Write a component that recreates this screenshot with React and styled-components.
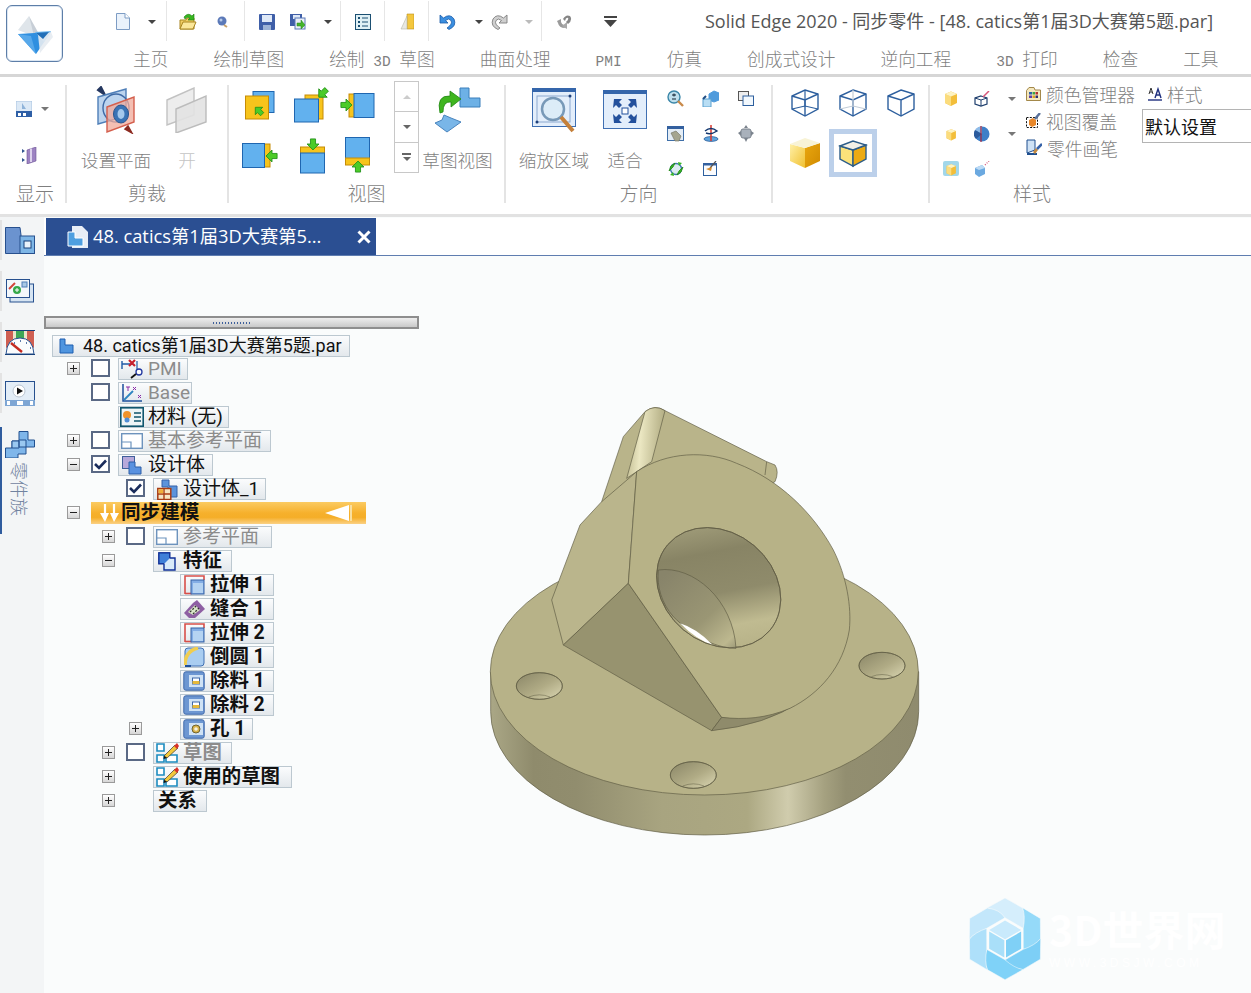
import React from 'react';
import styled, { createGlobalStyle } from 'styled-components';

const CJK = '"Noto Sans CJK SC", sans-serif';
const UI = '"Open Sans", "Noto Sans CJK SC", sans-serif';
const TREE = 'Roboto, "Noto Sans CJK SC", sans-serif';
const GRAY = '#7f7f7f';

const Global = createGlobalStyle`
  html, body { margin: 0; padding: 0; background: #fff; }
  body { font-family: ${UI}; }
`;

const Page = styled.div`
  width: 1251px;
  height: 993px;
  overflow: hidden;
  display: flex;
  flex-direction: column;
  background: #fff;
`;

/* ---------- header ---------- */
const Header = styled.header`
  height: 74px;
  display: flex;
  flex-shrink: 0;
`;
const AppButton = styled.div`
  width: 55px;
  height: 55px;
  margin: 5px 0 0 6px;
  border: 1px solid #5d7ea8;
  box-shadow: inset 0 0 0 1px #dbe6f2;
  border-radius: 6px;
  display: flex;
  align-items: center;
  justify-content: center;
  background: #fff;
`;
const HeaderMain = styled.div`
  flex: 1;
  display: flex;
  flex-direction: column;
  min-width: 0;
`;
const TopRow = styled.div`
  height: 43px;
  display: flex;
  align-items: center;
  padding-left: 45px;
`;
const Slot = styled.div`
  width: ${p => p.w}px;
  height: 40px;
  display: flex;
  align-items: center;
  justify-content: center;
  flex-shrink: 0;
`;
const QatSep = styled.div`
  width: 1px;
  height: 40px;
  margin-top: -2px;
  background: #e6e6e6;
  flex-shrink: 0;
`;
const Drop = styled.span`
  width: 0;
  height: 0;
  border-left: 4px solid transparent;
  border-right: 4px solid transparent;
  border-top: 4px solid ${p => p.c || '#444'};
`;
const DropUp = styled(Drop)`
  transform: rotate(180deg);
`;
const Title = styled.div`
  margin: -3px 0 0 71px;
  font-size: 18px;
  color: #555;
  white-space: nowrap;
`;
const TabRow = styled.nav`
  height: 29px;
  display: flex;
  align-items: center;
  gap: 45px;
  padding-left: 70px;
`;
const RibbonTab = styled.span`
  font-family: ${CJK};
  font-size: 17.7px;
  font-weight: 300;
  color: ${GRAY};
  white-space: nowrap;
`;
const Latin = styled.span`
  font-family: "Liberation Mono", monospace;
  font-size: 14.5px;
  white-space: pre;
`;

/* ---------- ribbon ---------- */
const Ribbon = styled.section`
  height: 137px;
  flex-shrink: 0;
  display: flex;
  border-top: 3px solid #d6d6d6;
  border-bottom: 3px solid #e2e2e2;
  box-sizing: content-box;
`;
const Group = styled.div`
  width: ${p => p.w}px;
  flex-shrink: 0;
  display: flex;
  flex-direction: column;
`;
const GroupBody = styled.div`
  height: 105px;
  display: flex;
  padding-left: ${p => p.pl || 0}px;
`;
const GroupLabel = styled.div`
  width: ${p => (p.w ? `${p.w}px` : 'auto')};
  height: 22px;
  padding-left: ${p => p.pl || 0}px;
  line-height: 22px;
  text-align: center;
  font-family: ${CJK};
  font-size: 19px;
  font-weight: 300;
  color: ${GRAY};
`;
const RibbonSep = styled.div`
  width: 2px;
  height: 118px;
  margin-top: 8px;
  flex-shrink: 0;
  background: #e4e4e4;
`;
const ShowCol = styled.div`
  display: flex;
  flex-direction: column;
  padding: 23px 0 0 16px;
`;
const ShowRow = styled.div`
  display: flex;
  align-items: center;
  gap: 9px;
  height: 18px;
  margin-left: ${p => p.ml || 0}px;
  margin-top: ${p => p.mt || 0}px;
`;
const BigBtn = styled.div`
  width: ${p => p.w}px;
  margin-left: ${p => p.ml || 0}px;
  flex-shrink: 0;
  padding-top: 3px;
  display: flex;
  flex-direction: column;
  align-items: center;
`;
const BigIcon = styled.div`
  height: 60px;
  margin-bottom: 9px;
  display: flex;
  align-items: center;
  justify-content: center;
`;
const BigText = styled.div`
  height: 22px;
  line-height: 22px;
  font-family: ${CJK};
  font-size: 17.6px;
  font-weight: 300;
  color: ${p => (p.off ? '#c4c4c4' : GRAY)};
  white-space: nowrap;
`;
const IconGrid = styled.div`
  display: grid;
  grid-template-columns: ${p => p.cols};
  grid-auto-rows: ${p => p.row}px;
  row-gap: ${p => p.gap || 0}px;
  margin: ${p => p.m || 0};
  place-items: center;
  flex-shrink: 0;
`;
const Gallery = styled.div`
  width: 23px;
  height: 90px;
  margin: 4px 0 0 18px;
  border: 1px solid #c8c8c8;
  display: flex;
  flex-direction: column;
  flex-shrink: 0;
`;
const GalleryCell = styled.div`
  flex: 1;
  display: flex;
  flex-direction: column;
  gap: 2px;
  align-items: center;
  justify-content: center;
  & + & { border-top: 1px solid #c8c8c8; }
`;
const GalleryBar = styled.span`
  width: 9px;
  height: 2px;
  background: #666;
`;
const SelectedBox = styled.div`
  width: 48px;
  height: 48px;
  box-sizing: border-box;
  border: 5px solid #bcd0ea;
  background: #fff;
  display: flex;
  align-items: center;
  justify-content: center;
`;
const StyleList = styled.div`
  display: flex;
  flex-direction: column;
  padding-top: 3px;
  width: 116px;
  flex-shrink: 0;
`;
const StyleItem = styled.div`
  height: 27px;
  display: flex;
  align-items: center;
  gap: 5px;
  font-family: ${CJK};
  font-size: 17.8px;
  font-weight: 300;
  color: ${GRAY};
  white-space: nowrap;
`;
const StyleSide = styled.div`
  display: flex;
  flex-direction: column;
  padding-top: 3px;
`;
const StyleHead = styled(StyleItem)`
  padding-left: 6px;
  height: 27px;
`;
const Combo = styled.div`
  width: 125px;
  height: 34px;
  margin-top: 2px;
  box-sizing: border-box;
  border: 1px solid #b4b4b4;
  padding-left: 2px;
  line-height: 32px;
  font-family: ${CJK};
  font-size: 18px;
  color: #111;
`;

/* ---------- document area ---------- */
const Work = styled.div`
  flex: 1;
  display: flex;
  min-height: 0;
`;
const Rail = styled.aside`
  width: 44px;
  flex-shrink: 0;
  background: #f3f5f6;
  padding-top: 3px;
  display: flex;
  flex-direction: column;
  gap: 11px;
`;
const RailItem = styled.div`
  height: 40px;
  border-left: 2px solid #e3e3e3;
  display: flex;
  align-items: center;
  justify-content: center;
  padding-right: 6px;
`;
const RailActive = styled.div`
  height: 107px;
  margin-top: 3px;
  border-left: 2px solid #2f5c9e;
  display: flex;
  flex-direction: column;
  align-items: center;
  padding: 4px 6px 0 0;
  box-sizing: border-box;
`;
const RailText = styled.div`
  writing-mode: vertical-rl;
  text-orientation: sideways;
  margin-top: 4px;
  font-family: ${CJK};
  font-size: 18px;
  font-weight: 300;
  color: #7183a0;
`;
const Main = styled.main`
  flex: 1;
  position: relative;
  background: #fafcfc;
  min-width: 0;
`;
const TabBar = styled.div`
  height: 37px;
  background: #fff;
  border-bottom: 1px solid #5f7db0;
  box-sizing: content-box;
`;
const DocTab = styled.div`
  width: 330px;
  height: 37px;
  margin: 1px 0 0 2px;
  background: #2b4f92;
  display: flex;
  align-items: center;
  padding-left: 21px;
  box-sizing: border-box;
  color: #fff;
`;
const DocTabText = styled.span`
  margin: -3px 0 0 4px;
  flex: 1;
  font-size: 18.3px;
  white-space: nowrap;
`;
const DocClose = styled.span`
  display: flex;
  margin-right: 5px;
`;
const TreePanel = styled.div`
  width: 375px;
  padding-top: 60px;
`;
const DragBar = styled.div`
  height: 13px;
  box-sizing: border-box;
  border: 2px solid #8e8e8e;
  background: linear-gradient(#eeeeee, #c9c9c9);
  display: flex;
  align-items: center;
  justify-content: center;
`;
const DragDots = styled.span`
  width: 38px;
  height: 2px;
  background: repeating-linear-gradient(90deg, #3d5f9a 0 1px, transparent 1px 3px);
`;
const Tree = styled.div`
  margin-top: 5px;
`;
const Row = styled.div`
  height: ${p => p.h || 24}px;
  padding-left: ${p => p.indent}px;
  display: flex;
  align-items: flex-start;
`;
const Expander = styled.span`
  width: 13px;
  height: 13px;
  margin-top: 5px;
  flex-shrink: 0;
  box-sizing: border-box;
  border: 1px solid ${p => (p.kind ? '#9a9a9a' : 'transparent')};
  background: ${p => (p.kind ? 'linear-gradient(#fff, #d6d6d6)' : 'transparent')};
  position: relative;
  &::before {
    content: ${p => (p.kind ? '""' : 'none')};
    position: absolute;
    left: 2px;
    right: 2px;
    top: 5px;
    height: 1px;
    background: #222;
  }
  &::after {
    content: ${p => (p.kind === 'plus' ? '""' : 'none')};
    position: absolute;
    top: 2px;
    bottom: 2px;
    left: 5px;
    width: 1px;
    background: #222;
  }
`;
const Check = styled.span`
  width: 19px;
  height: 18px;
  margin: 2px 8px 0 11px;
  flex-shrink: 0;
  box-sizing: border-box;
  border: 2px solid ${p => (p.hide ? 'transparent' : '#5a6985')};
  background: ${p => (p.hide ? 'transparent' : '#fff')};
  display: flex;
  align-items: center;
  justify-content: center;
`;
const Label = styled.div`
  width: ${p => p.w}px;
  height: 22px;
  margin-top: 1px;
  flex-shrink: 0;
  box-sizing: border-box;
  border: 1px solid #bcc8d0;
  background: linear-gradient(#fbfcfd, #e3e8ec);
  display: flex;
  align-items: center;
  padding-left: 1px;
  font-family: ${TREE};
  font-size: ${p => p.fs || (p.bold ? 19.4 : 19)}px;
  line-height: 20px;
  font-weight: ${p => (p.bold ? 700 : 400)};
  color: ${p => (p.dim ? '#8c8c8c' : '#111')};
  white-space: nowrap;
`;
const LabelIcon = styled.span`
  width: ${p => p.w || 24}px;
  height: 20px;
  margin-right: 4px;
  display: flex;
  align-items: center;
  justify-content: center;
  flex-shrink: 0;
`;
const PlainName = styled.span`
  margin-left: 3px;
`;
const SyncBar = styled.div`
  width: 275px;
  height: 22px;
  margin: 1px 0 0 11px;
  flex-shrink: 0;
  box-sizing: border-box;
  background: linear-gradient(#fbcb62 0%, #f6b02c 50%, #f5ae28 70%, #fbd184 100%);
  display: flex;
  align-items: center;
  padding: 0 14px 0 9px;
  font-family: ${CJK};
  font-size: 19.6px;
  font-weight: 700;
  color: #111;
`;
const SyncName = styled.span`
  flex: 1;
  margin: -5px 0 0 2px;
`;
const ModelBox = styled.div`
  position: absolute;
  left: 436px;
  top: 183px;
  line-height: 0;
`;
const Watermark = styled.div`
  position: absolute;
  left: 925px;
  top: 681px;
  display: flex;
  gap: 8px;
`;
const MarkText = styled.div`
  padding-top: 6px;
  color: #fff;
  font-family: ${CJK};
`;
const MarkTitle = styled.div`
  font-size: 41px;
  line-height: 48px;
  font-weight: 700;
  white-space: nowrap;
`;
const MarkUrl = styled.div`
  margin-top: 5px;
  font-family: "Liberation Sans", sans-serif;
  font-size: 12px;
  line-height: 12px;
  letter-spacing: 3.5px;
  white-space: nowrap;
`;

/* ---------- icon helpers ---------- */
const S = ({ w, h = w, vb, children }) => (
  <svg width={w} height={h} viewBox={vb || `0 0 ${w} ${h}`} style={{ display: 'block', flexShrink: 0 }}>{children}</svg>
);
const Arrow = ({ x, y, r = 0, k = 1 }) => (
  <path
    transform={`translate(${x} ${y}) rotate(${r}) scale(${k})`}
    d="M0-7 7 0H3V6H-3V0H-7Z"
    fill="#4ccb28"
    stroke="#1f8f16"
  />
);
const BLUE = '#62b1ee';
const BLINE = '#1f66b0';
const YEL = '#f7c41c';
const YLINE = '#c68c06';

const AppLogo = () => (
  <S w={40} h={42}>
    <path d="M14 3 21 24 3 17Z" fill="#dfe5ea" />
    <path d="M14 3 24 21 19 23Z" fill="#c7ced6" />
    <path d="M3 21 36 19 21 41Z" fill="#2f8fe0" />
    <path d="M20 19 36 18 29 29Z" fill="#6cb6ee" />
    <path d="M23 22 36 19 38 24 25 40Z" fill="#e6ebf1" opacity=".9" />
    <path d="M3 21 21 41 16 23Z" fill="#57a8ea" />
    <path d="M21 20 34 19 28 26Z" fill="#226fb8" />
  </S>
);
const DocIcon = () => (
  <S w={14} h={17}>
    <path d="M.5.5H9L13.5 5V16.5H.5Z" fill="#eaf2fb" stroke="#7d9cc4" />
    <path d="M9 .5V5H13.5" fill="#fff" stroke="#7d9cc4" />
  </S>
);
const OpenIcon = () => (
  <S w={18} h={17}>
    <path d="M1 7H7L8 5H15V16H1Z" fill="#f1cd63" stroke="#a88520" />
    <path d="M1 16 4 9H17L14 16Z" fill="#fbe79a" stroke="#a88520" />
    <path d="M5 4Q9-1 13 3L15 1V7H9L11 5Q8 3 6 6Z" fill="#37b61f" stroke="#1b7c10" strokeWidth=".6" />
  </S>
);
const BlobIcon = () => (
  <S w={11} h={12}>
    <circle cx="5" cy="5" r="4.5" fill="#5b79b8" />
    <circle cx="4" cy="4" r="1.5" fill="#b7c9e6" />
    <path d="M7 9 10 11" stroke="#c9a26a" strokeWidth="2" />
  </S>
);
const SaveIcon = () => (
  <S w={16} h={16}>
    <rect width="16" height="16" rx="1" fill="#3f5fa8" />
    <rect x="3" y="1" width="10" height="7" fill="#dfe9f7" />
    <rect x="4" y="11" width="8" height="5" fill="#9db3d6" />
  </S>
);
const SaveAllIcon = () => (
  <S w={16} h={16}>
    <rect width="12" height="12" fill="#3f5fa8" />
    <rect x="3" y="1" width="7" height="4" fill="#dfe9f7" />
    <rect x="5" y="4" width="10" height="11" fill="#e9eef6" stroke="#5b79b8" />
    <path d="M7 9H11V6L15 11 11 15V12H7Z" fill="#45b52a" stroke="#22801a" strokeWidth=".5" />
  </S>
);
const ListIcon = () => (
  <S w={16} h={16}>
    <rect x=".5" y=".5" width="15" height="15" fill="#dff0f5" stroke="#1b4f72" />
    <path d="M3 4H5M3 8H5M3 12H5" stroke="#1b4f72" strokeWidth="2" />
    <path d="M7 4H13M7 8H13M7 12H13" stroke="#1b4f72" />
  </S>
);
const DoorIcon = () => (
  <S w={14} h={17}>
    <path d="M7 1H14V16H7Z" fill="#f4c73e" stroke="#b89020" strokeWidth=".6" />
    <path d="M2 14 7 3V16H1Z" fill="#e8e8e2" stroke="#b7b7a8" strokeWidth=".6" />
  </S>
);
const UndoIcon = () => (
  <S w={17} h={16}>
    <path d="M1 1V9H9L6.5 6.5Q10 3.5 12 6.5 14 10 8 14L10 15.5Q18 12 15 5 11-1 4.5 4Z" fill="#3b8fe0" stroke="#1a5ba8" strokeWidth=".8" />
  </S>
);
const RedoSvg = () => (
  <S w={17} h={16}>
    <g transform="translate(17 0) scale(-1 1)">
      <path d="M1 1V9H9L6.5 6.5Q10 3.5 12 6.5 14 10 8 14L10 15.5Q18 12 15 5 11-1 4.5 4Z" fill="#cfcfcf" stroke="#7f7f7f" strokeWidth=".9" />
    </g>
  </S>
);
const SwapIcon = () => (
  <S w={16} h={16}>
    <path d="M1 7 5 5 5 8Q6 11 8 11L9 14Q3 14 2 9Z" fill="#9a9a9a" />
    <path d="M7 5Q10 0 14 2 17 6 12 10L10 8Q13 5 12 4 10 3 9 7Z" fill="#868686" />
    <path d="M6 12 11 8V15Z" fill="#a8a8a8" />
  </S>
);
const CustomIcon = () => (
  <S w={13} h={12}>
    <rect x="0" y="0" width="13" height="2" fill="#444" />
    <path d="M0 4H13L6.5 11Z" fill="#444" />
  </S>
);

const ShowIcon = () => (
  <S w={16} h={16}>
    <rect width="16" height="11" fill="#dce9f6" stroke="#a9c3e0" />
    <rect y="10" width="16" height="6" fill="#2e5fa6" />
    <path d="M2 12H5V15H2ZM7 12H10V15H7Z" fill="#fff" />
    <path d="M6 2 10 8H6Z" fill="#8fb3d9" />
  </S>
);
const ShowIcon2 = () => (
  <S w={15} h={17}>
    <path d="M0 2 3 4 0 6ZM0 11 3 13 0 15Z" fill="#33558f" />
    <path d="M5 3 14 0V14L5 17Z" fill="#9d83c2" stroke="#6b5396" strokeWidth=".6" />
    <path d="M9 1.5V15" stroke="#dcd2ec" strokeWidth="2" />
  </S>
);
const ClipPlaneIcon = () => (
  <S w={46} h={48}>
    <path d="M5 4 8 1 12 9Z" fill="#25375f" stroke="#25375f" strokeWidth="2" />
    <path d="M5 11 33 3V30L5 38Z" fill="#bcd4ee" stroke="#4f7fb8" strokeWidth="1.4" />
    <ellipse cx="23" cy="22" rx="13" ry="14" fill="none" stroke="#3e6aa6" strokeWidth="1.4" />
    <path d="M14 21 41 11V36L14 46Z" fill="#f0a99a" fillOpacity=".75" stroke="#d45f4d" strokeWidth="1.4" />
    <ellipse cx="28" cy="28" rx="7.5" ry="9" fill="#3a73b5" stroke="#26548f" />
    <ellipse cx="28" cy="28" rx="3.5" ry="5" fill="#a4c8ec" />
    <path d="M39 47 35 40 32 43Z" fill="#8c2a20" stroke="#8c2a20" strokeWidth="1.5" />
  </S>
);
const ClipOnIcon = () => (
  <S w={42} h={46}>
    <path d="M1 13 28 1V28L1 38Z" fill="#ededed" stroke="#c2c2c2" strokeWidth="1.4" />
    <path d="M10 22 40 9V35L10 46Z" fill="#e2e2e2" fillOpacity=".9" stroke="#bcbcbc" strokeWidth="1.4" />
  </S>
);
const V1 = () => (
  <S w={30} h={29}>
    <rect x="8" y=".5" width="21" height="21" fill={BLUE} stroke={BLINE} />
    <rect x=".5" y="5" width="23" height="23" fill={YEL} stroke={YLINE} />
    <Arrow x={14} y={20} r={-45} k={.75} />
  </S>
);
const V2 = () => (
  <S w={37} h={36}>
    <rect x="11" y="8" width="18" height="24" fill={YEL} stroke={YLINE} />
    <rect x=".5" y="12" width="24" height="23" fill={BLUE} stroke={BLINE} />
    <Arrow x={29} y={6} r={225} k={.85} />
  </S>
);
const V3 = () => (
  <S w={36} h={25}>
    <rect x="10" y="1" width="8" height="23" fill={YEL} stroke={YLINE} />
    <rect x="15" y=".5" width="20" height="24" fill={BLUE} stroke={BLINE} />
    <Arrow x={7} y={12} r={90} k={.85} />
  </S>
);
const V4 = () => (
  <S w={36} h={25}>
    <rect x="21" y="1" width="7" height="23" fill={YEL} stroke={YLINE} />
    <rect x=".5" y=".5" width="22" height="24" fill={BLUE} stroke={BLINE} />
    <Arrow x={30} y={13} r={-90} k={.85} />
  </S>
);
const V5 = () => (
  <S w={25} h={37}>
    <rect x=".5" y="10" width="24" height="7" fill={YEL} stroke={YLINE} />
    <rect x=".5" y="16" width="24" height="20" fill={BLUE} stroke={BLINE} />
    <Arrow x={13} y={7} r={180} k={.85} />
  </S>
);
const V6 = () => (
  <S w={25} h={37}>
    <rect x=".5" y=".5" width="24" height="21" fill={BLUE} stroke={BLINE} />
    <rect x=".5" y="21" width="24" height="7" fill={YEL} stroke={YLINE} />
    <Arrow x={13} y={30} k={.85} />
  </S>
);
const GoSketchIcon = () => (
  <S w={48} h={47}>
    <path d="M26 1H35V11H46V20H26Z" fill="#6db1e6" stroke="#3b7fbb" />
    <path d="M6 26Q2 8 16 9L16 4 27 12 17 20V15Q9 14 9 25Z" fill="#3fb51f" stroke="#1f8612" strokeWidth=".8" />
    <path d="M1 36 8 33 10 28 17 31 27 35 13 45Z" fill="#79b6e8" stroke="#4a84bd" />
  </S>
);
const ZoomAreaIcon = () => (
  <S w={45} h={45}>
    <rect x=".5" y=".5" width="43" height="38" fill="#e3eefb" stroke="#3f6fb2" />
    <rect width="44" height="4" fill="#3566ab" />
    <rect x="5" y="8" width="33" height="26" fill="none" stroke="#8ba8cf" />
    <circle cx="21" cy="21" r="11" fill="#dcecf8" stroke="#7899b8" strokeWidth="2.5" />
    <path d="M29 29 41 43" stroke="#c5803a" strokeWidth="4" />
    <circle cx="38" cy="8" r="1.5" fill="#1c3f7a" />
    <circle cx="5" cy="34" r="1.5" fill="#1c3f7a" />
  </S>
);
const FitIcon = () => (
  <S w={44} h={40}>
    <rect x=".5" y=".5" width="43" height="38" fill="#e3eefb" stroke="#3f6fb2" />
    <rect width="44" height="4" fill="#3566ab" />
    <path d="M11 9H19L16 12 19 15 16 18 13 15 10 18ZM33 9H25L28 12 25 15 28 18 31 15 34 18ZM11 33H19L16 30 19 27 16 24 13 27 10 24ZM33 33H25L28 30 25 27 28 24 31 27 34 24Z" fill="#23509c" />
    <rect x="19" y="18" width="6" height="6" fill="#fff" stroke="#23509c" />
  </S>
);
const Magnify = () => (
  <S w={17} h={17}>
    <circle cx="7" cy="7" r="6" fill="#bfe0ee" stroke="#3a86a8" strokeWidth="1.4" />
    <path d="M5 5H9M7 3.5V6.5M5 9H9" stroke="#123" />
    <path d="M11 11 16 16" stroke="#c98a4a" strokeWidth="2.4" />
  </S>
);
const CubeSmallBlue = () => (
  <S w={17} h={17}>
    <path d="M7 4 12 1 17 3V10L12 12 7 10Z" fill="#4f9bdc" stroke="#4f9bdc" />
    <rect x="1" y="9" width="8" height="8" fill="#b9def4" stroke="#5ba0cf" />
    <path d="M1 9 4 6" stroke="#1f4d84" strokeWidth="2" />
  </S>
);
const Windows = () => (
  <S w={16} h={15}>
    <rect x=".5" y=".5" width="10" height="9" fill="#eee" stroke="#555" />
    <rect x="5" y="5" width="10.5" height="9.5" fill="#f2f8fd" stroke="#2d5f9e" />
  </S>
);
const HandWin = () => (
  <S w={17} h={16}>
    <rect x=".5" y=".5" width="16" height="14" fill="#e4edf6" stroke="#3f6fa8" />
    <rect width="17" height="3" fill="#33609f" />
    <path d="M4 7 9 5 14 10 12 15H8Z" fill="#a5a58f" stroke="#6f6f60" strokeWidth=".6" />
  </S>
);
const RotateIcon = () => (
  <S w={16} h={17}>
    <ellipse cx="8" cy="14" rx="7" ry="2.4" fill="#5fa4dc" stroke="#1d4f90" strokeWidth=".7" />
    <path d="M8 0V16" stroke="#d8372c" strokeWidth="1.5" />
    <path d="M2 6Q8 1 14 6 8 10 3 8" fill="none" stroke="#11366e" strokeWidth="1.5" />
  </S>
);
const GrayPart = () => (
  <S w={16} h={17}>
    <rect x="3" y="4" width="10" height="9" rx="2" fill="#a9b1bb" stroke="#7b838d" />
    <path d="M0 8 3 6V11ZM16 8 13 6V11ZM8 0 6 3H10ZM8 17 6 13H10Z" fill="#7b838d" />
  </S>
);
const GreenRing = () => (
  <S w={16} h={16}>
    <circle cx="8" cy="8" r="5.5" fill="#dcebf2" stroke="#3f79b0" strokeWidth="1.4" />
    <path d="M1 10 3 5 7 2 5 6ZM15 6 13 11 9 14 11 10Z" fill="#39b822" stroke="#1e8612" strokeWidth=".8" />
    <path d="M10 1 14 2 11 5ZM6 15 2 14 5 11Z" fill="#39b822" />
  </S>
);
const BrushWin = () => (
  <S w={15} h={15}>
    <rect x=".5" y="2.5" width="13" height="12" fill="#fbfcfe" stroke="#2d5f9e" />
    <rect y="2" width="14" height="2.5" fill="#33609f" />
    <path d="M13 0 7 7" stroke="#555" strokeWidth="1.2" />
    <path d="M3 8 9 6 8 10Z" fill="#d68a2c" />
  </S>
);
const WireCube = ({ hidden }) => (
  <S w={30} h={30}>
    <path d="M15 2 28 6 28 21 15 28 2 21 2 8Z" fill="none" stroke="#2d5f9e" strokeWidth="1.4" />
    <path d="M2 8 15 12 28 6M15 12V28" fill="none" stroke="#2d5f9e" strokeWidth="1.4" />
    {hidden && <path d="M15 2V18M2 21 15 18 28 21" fill="none" stroke={hidden} strokeWidth="1.2" />}
  </S>
);
const ShadedCube = () => (
  <S w={32} h={32}>
    <defs>
      <linearGradient id="shadeY" x1="0" y1="0" x2="1" y2="1">
        <stop offset="0" stopColor="#fff0a6" />
        <stop offset="1" stopColor="#f0c030" />
      </linearGradient>
      <linearGradient id="shadeO" x1="0" y1="0" x2="1" y2="1">
        <stop offset="0" stopColor="#e9a70f" />
        <stop offset="1" stopColor="#d08a00" />
      </linearGradient>
    </defs>
    <path d="M16 11V31L1 24V7Z" fill="url(#shadeY)" />
    <path d="M16 11V31L31 24V6Z" fill="url(#shadeO)" />
    <path d="M16 1 31 6 16 11 1 7Z" fill="#f8f3d6" />
  </S>
);
const EdgeCube = () => (
  <S w={30} h={30}>
    <path d="M2 8 15 12V28L2 21Z" fill="#fce27a" stroke="#2b5c88" strokeWidth="1.4" />
    <path d="M15 12 28 7V21L15 28Z" fill="#ecaa12" stroke="#2b5c88" strokeWidth="1.4" />
    <path d="M2 8 15 3 28 7 15 12Z" fill="#f2f0e6" stroke="#2b5c88" strokeWidth="1.4" />
  </S>
);
const TinyYellow = ({ glow, small }) => (
  <S w={16} h={17}>
    {glow && <rect x="0" y="1" width="16" height="15" rx="2" fill="#a2d7ea" />}
    <g transform={small ? 'translate(2 3) scale(.78)' : undefined}>
      <path d="M8 1.5 14 4V13L8 16 2 13V4Z" fill="#f3be3a" />
      <path d="M2 4 8 6.5V16L2 13Z" fill="#fbdc7d" />
      <path d="M8 1.5 14 4 8 6.5 2 4Z" fill="#fdf3c4" />
    </g>
  </S>
);
const TinyWire = () => (
  <S w={16} h={16}>
    <path d="M7 5 13 7V13L7 15 1 13V7Z" fill="#fff" stroke="#1f3f6e" strokeWidth="1.2" />
    <path d="M1 7 7 9 13 7M7 9V15" fill="none" stroke="#1f3f6e" />
    <path d="M9 6 15 0" stroke="#d65578" strokeWidth="1.5" />
  </S>
);
const TinyBall = () => (
  <S w={16} h={16}>
    <circle cx="8" cy="8" r="7.5" fill="#3e7fc8" />
    <path d="M8 8 1 4A7.5 7.5 0 0 1 8 .5Z" fill="#8fbbe8" />
    <path d="M8 8 2 13A7.5 7.5 0 0 1 1 4Z" fill="#2b5a9c" />
    <path d="M7 0V16" stroke="#a3253c" strokeWidth="1.2" />
  </S>
);
const TinySpray = () => (
  <S w={16} h={16}>
    <path d="M1 7 8 4 11 7V13L5 16 1 13Z" fill="#6ba9e0" />
    <path d="M1 7 8 4 11 7 5 9Z" fill="#bcdaf4" />
    <path d="M11 4 15 0" stroke="#d65578" strokeDasharray="1 1.4" strokeWidth="1.3" />
  </S>
);
const PaletteIcon = () => (
  <S w={15} h={14}>
    <path d="M.5 3.5 3 .5H8L9 3H14.5V13.5H.5Z" fill="#f4e7bd" stroke="#a3884a" />
    <path d="M3 5H6V7.5H3Z" fill="#2b5fa8" /><path d="M6.5 5H9V7.5H6.5Z" fill="#3aa548" /><path d="M9.5 5H12V7.5H9.5Z" fill="#b32f2f" />
    <path d="M3 8.5H6V11H3Z" fill="#5f3da6" /><path d="M6.5 8.5H9V11H6.5Z" fill="#d8a01f" /><path d="M9.5 8.5H12V11H9.5Z" fill="#2f2f6e" />
  </S>
);
const OverlayIcon = () => (
  <S w={15} h={15}>
    <rect x=".5" y="4.5" width="11" height="10" fill="none" stroke="#111" strokeDasharray="2 1.3" />
    <path d="M3 7 7 5 10 7V12L6 14 3 12Z" fill="#e8872a" />
    <path d="M9 6 14 0" stroke="#58709a" strokeWidth="2.4" />
  </S>
);
const PartBrushIcon = () => (
  <S w={16} h={17}>
    <path d="M1 1H9V11L1 14Z" fill="#cfe2f5" stroke="#1f4f8f" />
    <path d="M1 14H11V16H1Z" fill="#1f4f8f" />
    <path d="M7 13 10 9 12 11 9 15Z" fill="#c58a3e" />
    <path d="M11 10 16 5" stroke="#3762a8" strokeWidth="2.5" />
  </S>
);
const StyleAIcon = () => (
  <S w={14} h={14}>
    <path d="M1 7 3 1 5 7M2 5H4" fill="none" stroke="#333" />
    <path d="M7 11 10 2 13 11M8 8H12" fill="none" stroke="#1f2f7e" strokeWidth="1.4" />
    <path d="M0 13H14" stroke="#1f2f7e" strokeWidth="1.4" />
  </S>
);

/* rail */
const RailDocs = () => (
  <S w={30} h={27}>
    <path d="M.5.5H15L16 8V26.5H.5Z" fill="#6b93cf" stroke="#27508e" />
    <rect x="15" y="9" width="14.5" height="17.5" fill="#7eb6e6" stroke="#27508e" />
    <rect x="19" y="14" width="7" height="7" fill="#e9f3fb" stroke="#17407a" />
  </S>
);
const RailPage = () => (
  <S w={28} h={24}>
    <rect x="4" y="5" width="23.5" height="18" fill="#d6e4f2" stroke="#27508e" />
    <rect x=".5" y=".5" width="23" height="18" fill="#f3f7fb" stroke="#27508e" />
    <path d="M3 10 9 4" stroke="#d2453a" strokeWidth="2" />
    <circle cx="11" cy="11" r="4" fill="#35a84a" />
    <path d="M9 11H13M11 9V13" stroke="#fff" />
    <rect x="16" y="3" width="5" height="5" fill="#a8c7e6" stroke="#4f7fb8" />
  </S>
);
const RailGauge = () => (
  <S w={30} h={25}>
    <path d="M0 0H30V25H0Z" fill="#f6f8fa" />
    <path d="M1 1H8V13L1 18Z" fill="#cf5f52" />
    <path d="M8 1H11V10L8 13Z" fill="#ece4c8" />
    <path d="M11 1H19V9H11Z" fill="#3ea655" />
    <path d="M19 1H22L22 13 19 9Z" fill="#ece4c8" />
    <path d="M22 1H29V18L22 13Z" fill="#cf5f52" />
    <path d="M1 24 Q2 8 15 8 28 8 29 24Z" fill="#fafbfc" stroke="#27508e" />
    <path d="M9 13H10M15 11H16M21 13H22M25 18H26" stroke="#27508e" strokeWidth="1.6" />
    <path d="M17 22 6 13" stroke="#c42a20" strokeWidth="2.4" />
    <path d="M0 .5H30M0 24.5H30" stroke="#17407a" />
  </S>
);
const RailMovie = () => (
  <S w={30} h={25}>
    <rect x=".5" y=".5" width="29" height="24" fill="#e3edf7" stroke="#27508e" />
    <rect y="19" width="30" height="6" fill="#7ea6d4" />
    <path d="M2 20H5V24H2ZM12 20H18V24H12ZM25 20H28V24H25Z" fill="#fff" />
    <circle cx="14" cy="10" r="6" fill="#fff" stroke="#b9c4d0" />
    <path d="M12 6.5 18 10 12 13.5Z" fill="#111" />
  </S>
);
const RailFamily = () => (
  <S w={30} h={27}>
    <path d="M14 .5H23V9H29.5V16H21V23H13V27H.5V17H7V10H14Z" fill="#7fb6ea" stroke="#22508f" />
    <path d="M7 10H14V17H7ZM14 9H21V16H14Z" fill="#9ac8f0" stroke="#22508f" />
  </S>
);

/* tree */
const IcoPar = () => (
  <S w={15} h={17}>
    <path d="M1 1H6V7H14V15H1Z" fill="#4f95df" stroke="#1e5fb0" />
  </S>
);
const IcoPmi = () => (
  <S w={22} h={20}>
    <path d="M1 2V10M1 5H12" stroke="#1f5aa6" strokeWidth="1.4" />
    <path d="M8 1 14 7M14 1 8 7" stroke="#c8202c" strokeWidth="2.2" />
    <path d="M16 2V10" stroke="#1f5aa6" strokeWidth="1.2" />
    <circle cx="18" cy="13" r="3" fill="#fff" stroke="#2238a0" strokeWidth="1.3" />
    <path d="M10 19 15 15" stroke="#111" strokeWidth="1.8" />
  </S>
);
const IcoBase = () => (
  <S w={22} h={20}>
    <path d="M2 1V18H21" fill="none" stroke="#1c4f9c" strokeWidth="1.5" />
    <path d="M3 17 12 8" stroke="#2e86c1" strokeWidth="1.8" />
    <path d="M5 4H9M7 4V8M12 4 15 7M15 4 12 7M17 12 20 15M20 12 17 15" stroke="#8a2da8" />
  </S>
);
const IcoMat = () => (
  <S w={24} h={20}>
    <rect x=".8" y=".8" width="22.4" height="18.4" fill="#eef5f7" stroke="#10566e" strokeWidth="1.6" />
    <circle cx="7" cy="8" r="4" fill="#f0932b" />
    <circle cx="7" cy="13" r="2.5" fill="#4f8ed6" />
    <path d="M14 6H21M14 10H21M14 14H21" stroke="#10566e" strokeWidth="1.5" />
  </S>
);
const IcoPlane = () => (
  <S w={22} h={16}>
    <rect x=".7" y=".7" width="20.6" height="14.6" fill="#fff" stroke="#6d93bd" strokeWidth="1.4" />
    <path d="M1 9H10V15" fill="none" stroke="#6d93bd" strokeWidth="1.2" />
  </S>
);
const IcoDesign = () => (
  <S w={20} h={19}>
    <rect x=".5" y=".5" width="12" height="12" fill="#b6a8da" stroke="#3f5f9a" />
    <path d="M7 6H13V11H19V18H7Z" fill="#5a92e0" stroke="#2c5fa8" />
  </S>
);
const IcoBody = () => (
  <S w={21} h={21}>
    <path d="M5 1H12V7H20V18H11V8H5Z" fill="#5b93dc" stroke="#3460a8" />
    <rect x=".8" y="9.5" width="13" height="11" fill="#f6e7c4" stroke="#a83c14" strokeWidth="1.5" />
    <path d="M7 9.5V20.5M1 15H14" stroke="#a83c14" strokeWidth="1.4" />
    <rect x="1.6" y="10.3" width="4.6" height="4" fill="#f0b03a" />
  </S>
);
const IcoFeature = () => (
  <S w={18} h={19}>
    <rect x=".8" y=".8" width="11" height="11" fill="#3f7fd8" stroke="#0f2f96" strokeWidth="1.4" />
    <path d="M6 12V18H17V6H12" fill="#d9eaf9" stroke="#0f2f96" strokeWidth="1.4" />
  </S>
);
const IcoExtrude = () => (
  <S w={21} h={20}>
    <path d="M1 19V1H20V5" fill="none" stroke="#d84f4a" strokeWidth="1.6" />
    <path d="M1 18.5H8" stroke="#d84f4a" strokeWidth="1.6" />
    <rect x="7" y="5" width="13" height="14" fill="#84aee6" stroke="#3560a4" />
    <rect x="9" y="8" width="10" height="10" fill="#b5d3f2" />
  </S>
);
const IcoSweep = () => (
  <S w={23} h={20}>
    <path d="M1 14 10 4 14 1 22 10 12 19 6 19Z" fill="#8e5fa3" />
    <path d="M5 13 12 6 17 11 10 16Z" fill="#d9e6c8" />
    <path d="M7 13 13 7M10 15 16 9" stroke="#2f2f2f" strokeDasharray="2 1.4" strokeWidth="1.3" />
  </S>
);
const IcoRound = () => (
  <S w={21} h={20}>
    <rect x="1" y="1" width="19" height="18" rx="3" fill="#a9cdf1" stroke="#3e6fb2" />
    <path d="M1 18Q1 4 14 1" fill="none" stroke="#f0cd50" strokeWidth="3.5" />
    <path d="M1 19H7" stroke="#1f4f9a" strokeWidth="2" />
  </S>
);
const IcoCut = ({ hole }) => (
  <S w={22} h={20}>
    <rect x=".8" y=".8" width="20.4" height="18.4" rx="2" fill="#6d97d2" stroke="#3e68aa" />
    <rect x="6" y="4" width="14" height="12" fill="#cfe2f5" />
    {hole ? (
      <>
        <circle cx="13" cy="10" r="4" fill="#d7b24a" stroke="#6f6330" />
        <circle cx="13" cy="10" r="1.8" fill="#f6f2e0" />
      </>
    ) : (
      <>
        <rect x="9.5" y="7" width="7" height="6" fill="#fff" stroke="#3e68aa" />
        <rect x="9.5" y="10" width="7" height="3" fill="#e6b93a" />
      </>
    )}
  </S>
);
const IcoSketch = () => (
  <S w={23} h={20}>
    <path d="M1 1H8V8H1ZM1 12H8V19H1ZM10 12H21V19H10Z" fill="#fff" stroke="#1d8cc0" strokeWidth="1.6" />
    <path d="M8 13 19 2 22 5 11 15Z" fill="#f2c83c" stroke="#333" strokeWidth=".7" />
    <path d="M18 3 21 0 23 3 21 6Z" fill="#d8322a" />
    <path d="M8 13 7.5 16 11 15Z" fill="#111" />
  </S>
);
const TickMark = () => (
  <S w={13} h={11}>
    <path d="M1 5 5 9 12 1.5" fill="none" stroke="#1b2d5c" strokeWidth="2.6" />
  </S>
);
const SyncArrows = () => (
  <S w={19} h={18}>
    <path d="M5 0V10M14 0V10" stroke="#fff" strokeWidth="2.2" />
    <path d="M0 9 5 18 9 9ZM10 9 14 18 19 9Z" fill="#fff" />
  </S>
);
const SyncBack = () => (
  <S w={27} h={16}>
    <path d="M0 8 24 0V16Z" fill="#fff" />
    <path d="M25 0H27V16H25Z" fill="#f9dfa0" />
  </S>
);

/* part, drawn with the coordinates of a 3x crop, so 1 unit = 1/3 px */
const Hole = ({ cx, cy }) => (
  <g stroke="#615e45" strokeWidth="2">
    <ellipse cx={cx} cy={cy} rx="69" ry="40" fill="url(#holeWall)" />
    <path d={`M${cx - 32} ${cy + 33} Q${cx} ${cy + 20} ${cx + 32} ${cy + 33}`} fill="none" strokeWidth="1.5" />
    <ellipse cx={cx} cy={cy} rx="69" ry="40" fill="none" />
  </g>
);
const Part = () => (
  <svg width="450" height="440" viewBox="0 0 1350 1320" style={{ display: 'block' }}>
    <defs>
      <linearGradient id="rim" x1="32" x2="1315" y1="0" y2="0" gradientUnits="userSpaceOnUse">
        <stop offset="0" stopColor="#aaa786" />
        <stop offset=".1" stopColor="#8f8b6c" />
        <stop offset=".2" stopColor="#918d6e" />
        <stop offset=".4" stopColor="#a8a480" />
        <stop offset=".6" stopColor="#aca882" />
        <stop offset=".695" stopColor="#d0ccad" />
        <stop offset=".78" stopColor="#a5a180" />
        <stop offset=".83" stopColor="#928e70" />
        <stop offset="1" stopColor="#8f8b6e" />
      </linearGradient>
      <linearGradient id="holeWall" x1="0" x2="1" y1="0" y2="1">
        <stop offset="0" stopColor="#8a8667" />
        <stop offset=".55" stopColor="#b0ab85" />
        <stop offset="1" stopColor="#dcd8b4" />
      </linearGradient>
      <linearGradient id="fin" x1="0" x2="1" y1="0" y2=".1">
        <stop offset="0" stopColor="#bab58a" />
        <stop offset=".4" stopColor="#ebe7c2" />
        <stop offset="1" stopColor="#b2ad83" />
      </linearGradient>
      <linearGradient id="bore" x1="560" y1="420" x2="880" y2="680" gradientUnits="userSpaceOnUse">
        <stop offset="0" stopColor="#a39f7c" />
        <stop offset=".25" stopColor="#888465" />
        <stop offset=".55" stopColor="#8f8b6b" />
        <stop offset=".8" stopColor="#c0bb91" />
        <stop offset="1" stopColor="#b6b187" />
      </linearGradient>
      <linearGradient id="bore2" x1="560" y1="520" x2="760" y2="740" gradientUnits="userSpaceOnUse">
        <stop offset="0" stopColor="#88846a" />
        <stop offset=".6" stopColor="#9a9674" />
        <stop offset=".92" stopColor="#bdb88f" />
        <stop offset="1" stopColor="#a5a17e" />
      </linearGradient>
    </defs>
    <g stroke="#5f5c44" strokeWidth="2" strokeLinejoin="round">
      <path d="M32 815V935A642 370 0 0 0 1316 935V815Z" fill="url(#rim)" />
      <ellipse cx="673" cy="815" rx="642" ry="370" fill="#b7b288" />
      <path d="M365 305 430 110 495 35Q525 12 555 32L860 185 885 195Q898 215 885 245L700 330 420 330Z" fill="#b9b48a" />
      <path d="M495 35Q525 12 555 32L515 185 440 235Z" fill="url(#fin)" />
      <path d="M860 185 855 225" fill="none" />
      <path d="M470 215 365 305 300 375 215 600 250 735 445 550Z" fill="#bab58c" />
      <path d="M445 550 250 735 695 992 725 952Z" fill="#97936f" />
      <path d="M695 992 725 952Q850 955 960 905 860 975 695 992Z" fill="#8f8b6b" />
      <path d="M470 215C560 155 680 150 770 190 900 240 1000 340 1060 450 1100 530 1115 620 1108 690 1090 800 1020 880 930 925 860 955 790 960 725 952L445 550Z" fill="#b7b287" />
      <g transform="rotate(40 716 563)">
        <ellipse cx="716" cy="563" rx="200" ry="165" fill="url(#bore)" />
      </g>
      <path d="M535 510C640 495 760 600 768 745 700 745 630 700 580 650 545 610 530 560 535 510Z" fill="url(#bore2)" />
      <path d="M600 670Q650 685 698 735 650 720 600 670Z" fill="#fff" stroke="none" />
      <g transform="rotate(40 716 563)">
        <ellipse cx="716" cy="563" rx="200" ry="165" fill="none" />
      </g>
    </g>
    <Hole cx={178} cy={858} />
    <Hole cx={1206} cy={797} />
    <Hole cx={640} cy={1125} />
  </svg>
);

const bladeColors = ['#d5eefc', '#95daf9', '#7dcff6', '#7fd2f8', '#aee0fa', '#c3e7fb'];
const LogoMark = () => (
  <svg width="72" height="82" viewBox="55 55 214 244" style={{ display: 'block' }}>
    {bladeColors.map((c, i) => (
      <path
        key={c}
        transform={`rotate(${i * 60} 162 176.5)`}
        d="M108 85 162 55 215 85Q230 120 216 145L162 114Q135 90 108 85Z"
        fill={c}
        stroke="#fafcfc"
        strokeWidth="1.5"
      />
    ))}
    <path d="M162 122 210 150 162 178 115 150Z" fill="#c9eafc" />
    <path d="M115 155 160 181V232L115 206Z" fill="#a9dff9" />
    <path d="M210 155 165 181V232L210 206Z" fill="#7fd0f6" />
  </svg>
);

const CloseX = () => (
  <S w={14} h={14}>
    <path d="M1.5 1.5 12.5 12.5M12.5 1.5 1.5 12.5" stroke="#fff" strokeWidth="3" />
  </S>
);
const TabDoc = () => (
  <S w={22} h={24}>
    <path d="M5 1H15L21 7V23H5Z" fill="#e8eef6" />
    <path d="M1 7H8V13H16V21H1Z" fill="#4f9fe0" stroke="#fff" />
  </S>
);

/* ---------- data ---------- */
const tabs = [
  '主页', '绘制草图', <>绘制<Latin> 3D </Latin>草图</>, '曲面处理', <Latin>PMI</Latin>,
  '仿真', '创成式设计', '逆向工程', <><Latin>3D </Latin>打印</>, '检查', '工具',
];

const rows = [
  { indent: 8, root: true, w: 298, name: '48. catics第1届3D大赛第5题.par', icon: <IcoPar />, pad: 25 },
  { indent: 23, exp: 'plus', check: 'off', w: 70, name: 'PMI', dim: true, icon: <IcoPmi /> },
  { indent: 23, check: 'off', w: 74, name: 'Base', dim: true, icon: <IcoBase /> },
  { indent: 23, check: 'none', w: 111, name: '材料 (无)', icon: <IcoMat /> },
  { indent: 23, exp: 'plus', check: 'off', w: 153, name: '基本参考平面', dim: true, icon: <IcoPlane /> },
  { indent: 23, exp: 'minus', check: 'on', w: 95, name: '设计体', icon: <IcoDesign /> },
  { indent: 58, check: 'on', w: 113, name: '设计体_1', icon: <IcoBody /> },
  { sync: true, indent: 23, exp: 'minus' },
  { indent: 58, exp: 'plus', check: 'off', w: 119, name: '参考平面', dim: true, icon: <IcoPlane /> },
  { indent: 58, exp: 'minus', check: 'none', w: 79, name: '特征', bold: true, icon: <IcoFeature /> },
  { indent: 85, check: 'none', w: 94, name: '拉伸 1', bold: true, icon: <IcoExtrude /> },
  { indent: 85, check: 'none', w: 94, name: '缝合 1', bold: true, icon: <IcoSweep /> },
  { indent: 85, check: 'none', w: 94, name: '拉伸 2', bold: true, icon: <IcoExtrude /> },
  { indent: 85, check: 'none', w: 94, name: '倒圆 1', bold: true, icon: <IcoRound /> },
  { indent: 85, check: 'none', w: 94, name: '除料 1', bold: true, icon: <IcoCut /> },
  { indent: 85, check: 'none', w: 94, name: '除料 2', bold: true, icon: <IcoCut /> },
  { indent: 85, exp: 'plus', check: 'none', w: 73, name: '孔 1', bold: true, icon: <IcoCut hole /> },
  { indent: 58, exp: 'plus', check: 'off', w: 79, name: '草图', dim: true, bold: true, icon: <IcoSketch /> },
  { indent: 58, exp: 'plus', check: 'none', w: 139, name: '使用的草图', bold: true, icon: <IcoSketch /> },
  { indent: 58, exp: 'plus', check: 'none', w: 54, name: '关系', bold: true, plain: true },
];

const TreeRow = ({ row }) => {
  if (row.sync) {
    return (
      <Row indent={row.indent}>
        <Expander kind={row.exp} />
        <SyncBar>
          <SyncArrows />
          <SyncName>同步建模</SyncName>
          <SyncBack />
        </SyncBar>
      </Row>
    );
  }
  if (row.root) {
    return (
      <Row indent={row.indent} h={23}>
        <Label w={row.w} fs={18}>
          <LabelIcon w={row.pad}>{row.icon}</LabelIcon>
          {row.name}
        </Label>
      </Row>
    );
  }
  return (
    <Row indent={row.indent}>
      <Expander kind={row.exp} />
      <Check hide={row.check === 'none'}>{row.check === 'on' && <TickMark />}</Check>
      <Label w={row.w} dim={row.dim} bold={row.bold}>
        {row.icon && <LabelIcon>{row.icon}</LabelIcon>}
        {row.plain ? <PlainName>{row.name}</PlainName> : row.name}
      </Label>
    </Row>
  );
};

export default function App() {
  return (
    <Page>
      <Global />
      <Header>
        <AppButton><AppLogo /></AppButton>
        <HeaderMain>
          <TopRow>
            <Slot w={30}><DocIcon /></Slot>
            <Slot w={28}><Drop /></Slot>
            <QatSep />
            <Slot w={42}><OpenIcon /></Slot>
            <Slot w={26}><BlobIcon /></Slot>
            <Slot w={9} />
            <QatSep />
            <Slot w={44}><SaveIcon /></Slot>
            <Slot w={18}><SaveAllIcon /></Slot>
            <Slot w={9} />
            <Slot w={24}><Drop /></Slot>
            <QatSep />
            <Slot w={43}><ListIcon /></Slot>
            <QatSep />
            <Slot w={43}><DoorIcon /></Slot>
            <QatSep />
            <Slot w={36}><UndoIcon /></Slot>
            <Slot w={27}><Drop /></Slot>
            <Slot w={14}><RedoSvg /></Slot>
            <Slot w={11} />
            <Slot w={24}><Drop c="#bbb" /></Slot>
            <QatSep />
            <Slot w={44}><SwapIcon /></Slot>
            <Slot w={48}><CustomIcon /></Slot>
            <Title>Solid Edge 2020 - 同步零件 - [48. catics第1届3D大赛第5题.par]</Title>
          </TopRow>
          <TabRow>
            {tabs.map((t, i) => <RibbonTab key={i}>{t}</RibbonTab>)}
          </TabRow>
        </HeaderMain>
      </Header>

      <Ribbon>
        <Group w={65}>
          <GroupBody>
            <ShowCol>
              <ShowRow><ShowIcon /><Drop c="#777" /></ShowRow>
              <ShowRow ml={6} mt={28}><ShowIcon2 /></ShowRow>
            </ShowCol>
          </GroupBody>
          <GroupLabel pl={5}>显示</GroupLabel>
        </Group>
        <RibbonSep />
        <Group w={160}>
          <GroupBody pl={14}>
            <BigBtn w={70}>
              <BigIcon><ClipPlaneIcon /></BigIcon>
              <BigText>设置平面</BigText>
            </BigBtn>
            <BigBtn w={42} ml={15}>
              <BigIcon><ClipOnIcon /></BigIcon>
              <BigText off>开</BigText>
            </BigBtn>
          </GroupBody>
          <GroupLabel>剪裁</GroupLabel>
        </Group>
        <RibbonSep />
        <Group w={275}>
          <GroupBody pl={5}>
            <IconGrid cols="52px 52px 38px" row={50} m="3px 0 0 0">
              <V1 /><V2 /><V3 /><V4 /><V5 /><V6 />
            </IconGrid>
            <Gallery>
              <GalleryCell><DropUp c="#ccc" /></GalleryCell>
              <GalleryCell><Drop c="#666" /></GalleryCell>
              <GalleryCell><GalleryBar /><Drop c="#666" /></GalleryCell>
            </Gallery>
            <BigBtn w={71} ml={3}>
              <BigIcon><GoSketchIcon /></BigIcon>
              <BigText>草图视图</BigText>
            </BigBtn>
          </GroupBody>
          <GroupLabel>视图</GroupLabel>
        </Group>
        <RibbonSep />
        <Group w={265}>
          <GroupBody pl={12}>
            <BigBtn w={72}>
              <BigIcon><ZoomAreaIcon /></BigIcon>
              <BigText>缩放区域</BigText>
            </BigBtn>
            <BigBtn w={44} ml={13}>
              <BigIcon><FitIcon /></BigIcon>
              <BigText>适合</BigText>
            </BigBtn>
            <IconGrid cols="35px 35px 35px" row={35} m="4px 0 0 11px">
              <Magnify /><CubeSmallBlue /><Windows />
              <HandWin /><RotateIcon /><GrayPart />
              <GreenRing /><BrushWin />
            </IconGrid>
          </GroupBody>
          <GroupLabel>方向</GroupLabel>
        </Group>
        <RibbonSep />
        <Group w={155}>
          <GroupBody pl={8}>
            <IconGrid cols="48px 48px 48px" row={48} gap={2} m="2px 0 0 0">
              <WireCube hidden="#2d5f9e" />
              <WireCube hidden="#c3cdd8" />
              <WireCube />
              <ShadedCube />
              <SelectedBox><EdgeCube /></SelectedBox>
            </IconGrid>
          </GroupBody>
        </Group>
        <RibbonSep />
        <Group w={321}>
          <GroupBody pl={6}>
            <IconGrid cols="30px 32px 28px" row={35} m="4px 0 0 0">
              <TinyYellow /><TinyWire /><Drop c="#777" />
              <TinyYellow small /><TinyBall /><Drop c="#777" />
              <TinyYellow glow small /><TinySpray />
            </IconGrid>
            <StyleList>
              <StyleItem><PaletteIcon />颜色管理器</StyleItem>
              <StyleItem><OverlayIcon />视图覆盖</StyleItem>
              <StyleItem><PartBrushIcon />零件画笔</StyleItem>
            </StyleList>
            <StyleSide>
              <StyleHead><StyleAIcon />样式</StyleHead>
              <Combo>默认设置</Combo>
            </StyleSide>
          </GroupBody>
          <GroupLabel w={204}>样式</GroupLabel>
        </Group>
      </Ribbon>

      <Work>
        <Rail>
          <RailItem><RailDocs /></RailItem>
          <RailItem><RailPage /></RailItem>
          <RailItem><RailGauge /></RailItem>
          <RailItem><RailMovie /></RailItem>
          <RailActive>
            <RailFamily />
            <RailText>零件族</RailText>
          </RailActive>
        </Rail>
        <Main>
          <TabBar>
            <DocTab>
              <TabDoc />
              <DocTabText>48. catics第1届3D大赛第5...</DocTabText>
              <DocClose><CloseX /></DocClose>
            </DocTab>
          </TabBar>
          <TreePanel>
            <DragBar><DragDots /></DragBar>
            <Tree>
              {rows.map((row, i) => <TreeRow key={i} row={row} />)}
            </Tree>
          </TreePanel>
          <ModelBox><Part /></ModelBox>
          <Watermark>
            <LogoMark />
            <MarkText>
              <MarkTitle>3D世界网</MarkTitle>
              <MarkUrl>WWW.3DSJW.COM</MarkUrl>
            </MarkText>
          </Watermark>
        </Main>
      </Work>
    </Page>
  );
}
